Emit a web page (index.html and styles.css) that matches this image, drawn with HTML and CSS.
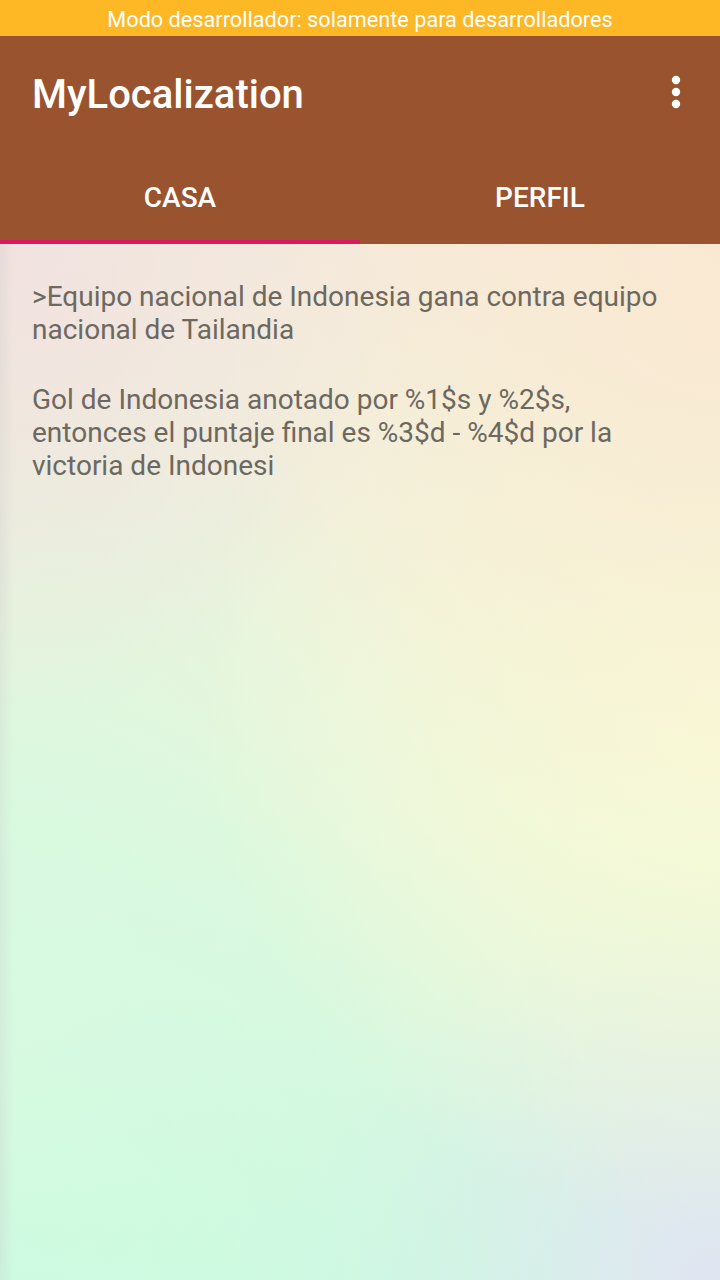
FILE: index.html
```html
<!DOCTYPE html>
<html lang="es">
<head>
<meta charset="utf-8">
<title>MyLocalization</title>
<link rel="stylesheet" href="styles.css">
</head>
<body>
<div class="screen">
  <div class="statusbar">Modo desarrollador: solamente para desarrolladores</div>
  <header class="appbar">
    <div class="toolbar">
      <h1 class="title">MyLocalization</h1>
      <div class="overflow" aria-label="Más opciones">
        <svg width="12" height="36" viewBox="0 0 12 36"><circle cx="6" cy="6" r="4.2" fill="#fff"/><circle cx="6" cy="18" r="4.2" fill="#fff"/><circle cx="6" cy="30" r="4.2" fill="#fff"/></svg>
      </div>
    </div>
    <nav class="tabs">
      <div class="tab active">CASA</div>
      <div class="tab">PERFIL</div>
    </nav>
  </header>
  <main class="content">
    <p class="text">&gt;Equipo nacional de Indonesia gana contra equipo nacional de Tailandia</p>
    <p class="text">Gol de Indonesia anotado por %1$s y %2$s, entonces el puntaje final es %3$d - %4$d por la victoria de Indonesi</p>
  </main>
</div>
</body>
</html>
```

FILE: styles.css
```css
* { box-sizing: border-box; }
html, body { margin: 0; padding: 0; }
body { font-family: Roboto, "Noto Sans", sans-serif; }
.screen {
  width: 720px;
  height: 1280px;
  display: flex;
  flex-direction: column;
  overflow: hidden;
}
.statusbar {
  height: 36px;
  padding-top: 2px;
  background: #feb826;
  color: #fff;
  font-size: 21.7px;
  display: flex;
  align-items: center;
  justify-content: center;
}
.appbar { background: #99542f; color: #fff; }
.toolbar {
  height: 112px;
  display: flex;
  align-items: center;
  justify-content: space-between;
  padding: 4px 38px 0 32px;
}
.title {
  margin: 0;
  font-size: 40px;
  font-weight: 500;
}
.overflow { display: flex; align-items: center; margin-top: -4px; }
.overflow svg { display: block; }
.tabs {
  height: 96px;
  display: grid;
  grid-template-columns: 1fr 1fr;
}
.tab {
  display: flex;
  align-items: center;
  justify-content: center;
  font-size: 28px;
  font-weight: 500;
  border-bottom: 4px solid transparent;
  padding-top: 6px;
}
.tab.active { border-bottom-color: #d81b60; }
.content {
  flex: 1;
  padding: 36px 32px 0 32px;
  background:
    linear-gradient(to right, rgba(200,200,200,0.28), rgba(200,200,200,0) 14px),
    radial-gradient(ellipse 420px 480px at 0% 0%, rgba(241,226,224,1), rgba(241,226,224,0)),
    radial-gradient(ellipse 540px 600px at 100% 0%, rgba(250,232,210,1), rgba(250,232,210,0)),
    radial-gradient(ellipse 520px 520px at 100% 45%, rgba(249,250,214,1), rgba(249,250,214,0)),
    radial-gradient(ellipse 480px 600px at 0% 68%, rgba(216,250,224,1), rgba(216,250,224,0)),
    radial-gradient(ellipse 660px 600px at 0% 100%, rgba(196,252,226,1), rgba(196,252,226,0)),
    radial-gradient(ellipse 440px 380px at 100% 100%, rgba(224,229,242,1), rgba(224,229,242,0)),
    linear-gradient(to bottom, #f4ecdc, #e9f6dc 55%, #d6f6e2);
}
.text {
  margin: 0 0 37px 0;
  font-size: 28px;
  line-height: 33px;
  color: #6d6860;
}
```
